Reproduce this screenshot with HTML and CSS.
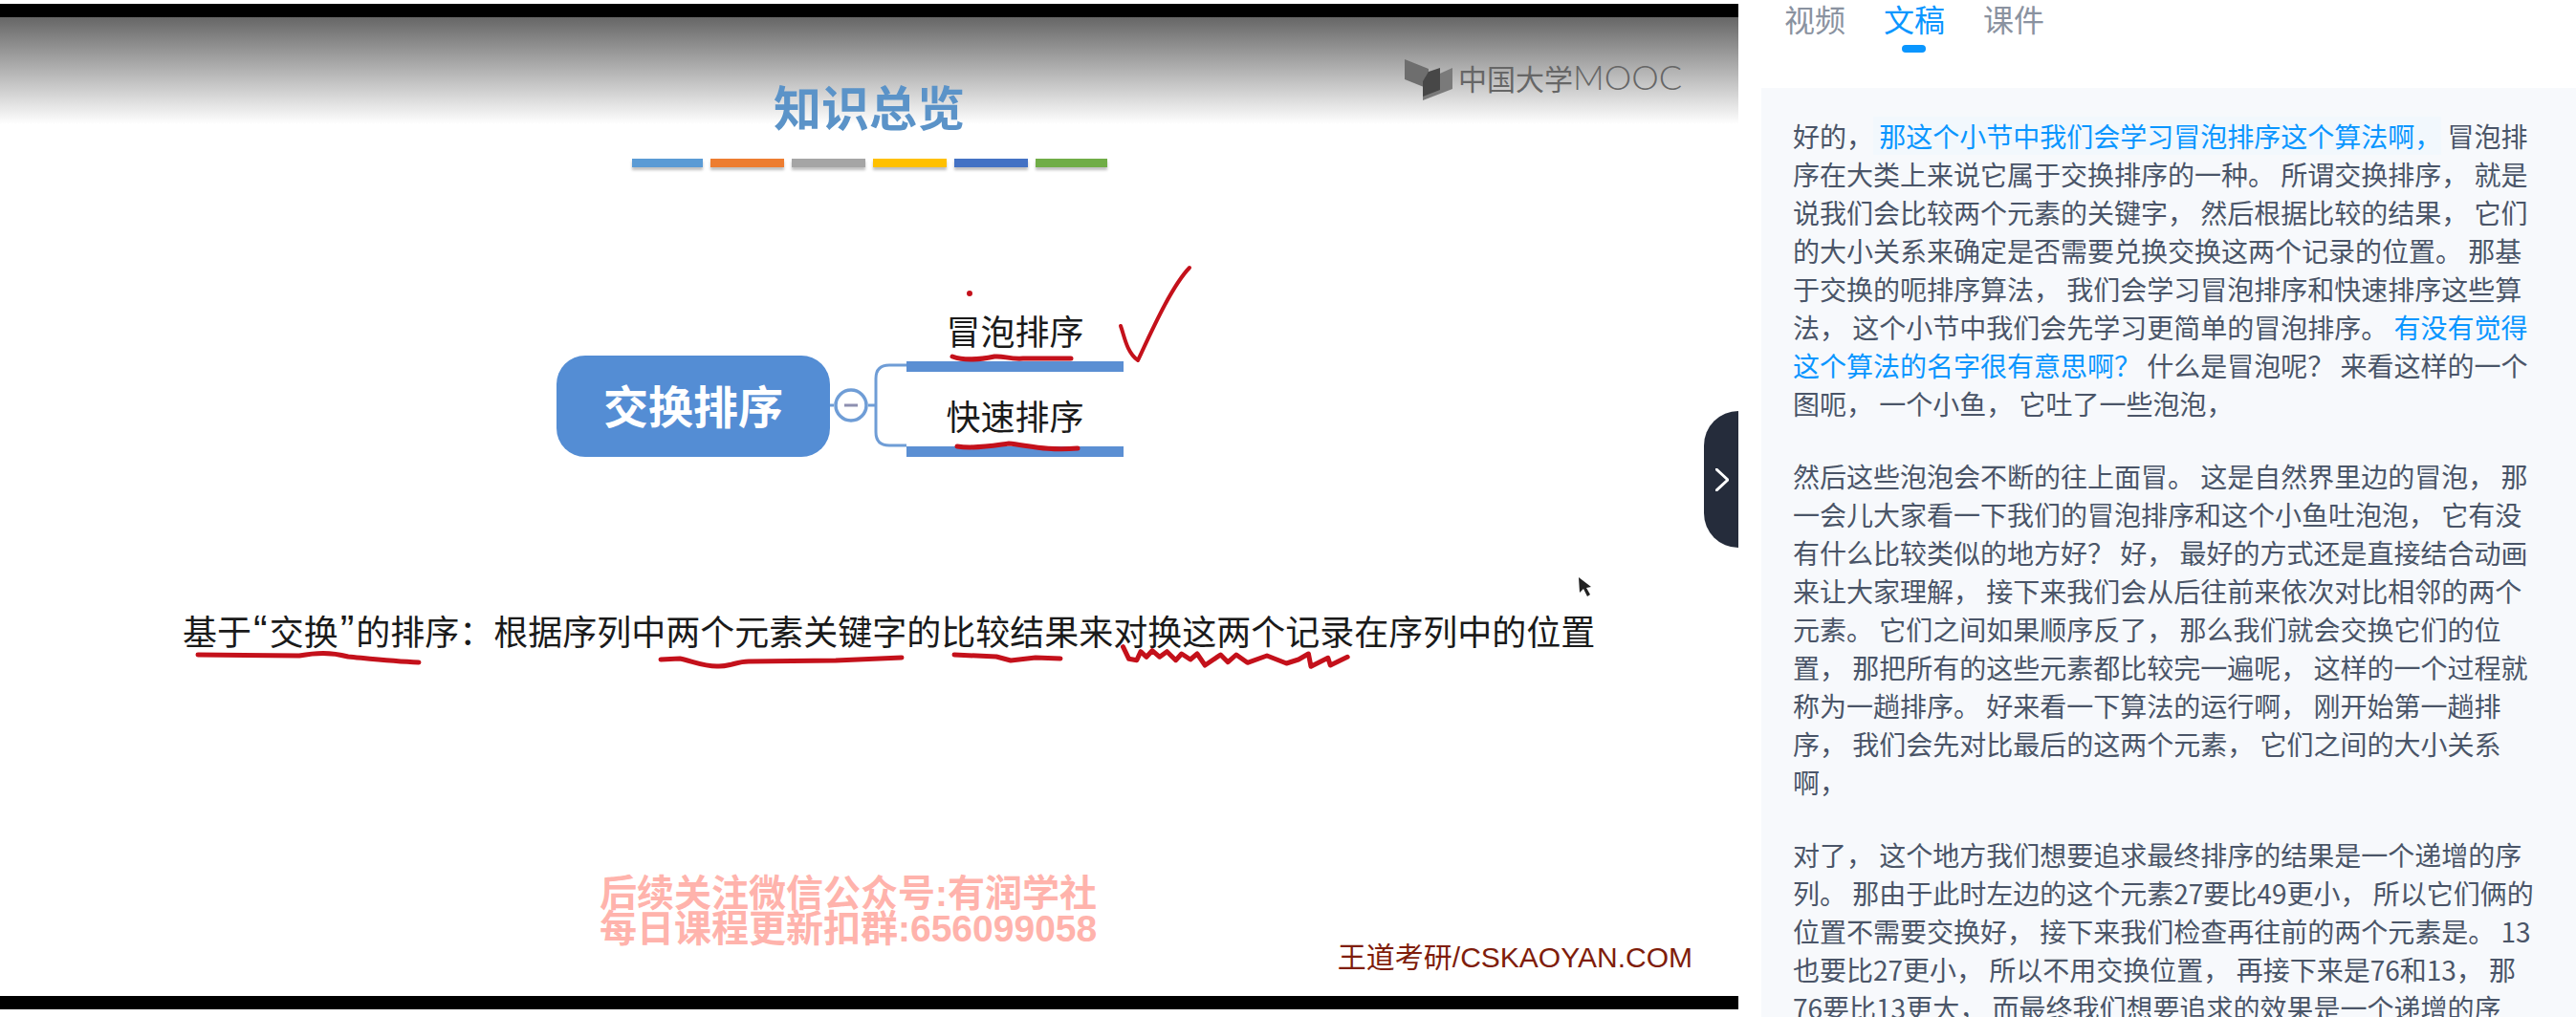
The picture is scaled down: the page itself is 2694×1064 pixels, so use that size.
FILE: index.html
```html
<!DOCTYPE html>
<html lang="zh-CN">
<head>
  <meta charset="UTF-8">
  <title>冒泡排序</title>
  <link rel="stylesheet" href="styles.css">
</head>
<body>
  <div class="video">
    <div class="slide">
      <h1 class="slide-title">知识总览</h1>
      <div class="color-bars">
        <span class="bar bar-blue"></span>
        <span class="bar bar-orange"></span>
        <span class="bar bar-gray"></span>
        <span class="bar bar-yellow"></span>
        <span class="bar bar-navy"></span>
        <span class="bar bar-green"></span>
      </div>

      <div class="mindmap">
        <div class="node">交换排序</div>
        <svg class="bracket" width="80" height="106" viewBox="0 0 80 106">
          <path d="M0 52H4M40 52H48M80 10H62Q48 10 48 24V80Q48 94 62 94H80" fill="none" stroke="#6f9dd6" stroke-width="3"/>
          <circle cx="22" cy="52" r="16" fill="#fff" stroke="#6f9dd6" stroke-width="3.5"/>
          <path d="M15 52H29" stroke="#8d8fb0" stroke-width="3"/>
        </svg>
        <div class="branches">
          <div class="branch">冒泡排序</div>
          <div class="branch">快速排序</div>
        </div>
      </div>

      <p class="slide-desc">基于<span class="quote">“</span>交换<span class="quote">”</span>的排序：根据序列中两个元素关键字的比较结果来对换这两个记录在序列中的位置</p>

      <div class="watermark">
        <div>后续关注微信公众号:有润学社</div>
        <div>每日课程更新扣群:656099058</div>
      </div>
      <div class="source">王道考研/CSKAOYAN.COM</div>

      <div class="logo">
        <svg width="52" height="46" viewBox="0 0 52 46">
          <path d="M0 1L25 11V32L0 22Z" fill="#6e6e6e"/>
          <path d="M19 24L50 10V32L19 44Z" fill="#7a7a7a"/>
          <path d="M25 14L37 10V33L19 40V24Z" fill="#474747"/>
        </svg>
        <span class="logo-text">中国大学<span class="logo-latin">MOOC</span></span>
      </div>

      <!-- handwriting on top of the slide, coordinates are page pixels -->
      <svg class="ink" viewBox="0 18 1818 1024">
        <g fill="none" stroke="#c4111b" stroke-linecap="round" stroke-linejoin="round">
          <circle cx="1014" cy="307" r="1.5" stroke-width="3"/>
          <path stroke-width="4" d="M1172 341C1176 352 1178 368 1190 377C1205 345 1225 300 1244 280"/>
          <path stroke-width="5" d="M996 373C1010 378 1025 376 1040 373C1050 372 1055 376 1070 375L1120 375"/>
          <path stroke-width="5" d="M1001 467C1020 470 1040 466 1055 464C1075 466 1095 472 1127 469"/>
          <path stroke-width="5" d="M207 685L313 686C330 683 345 682 364 687C385 689 410 692 438 693"/>
          <path stroke-width="5" d="M691 690L711 689C725 692 738 698 752 697C765 697 770 692 783 692L874 691L943 688"/>
          <path stroke-width="5" d="M998 685L1042 687L1057 691L1083 688L1109 689"/>
          <polyline stroke-width="5" points="1174.5,676.7 1180.6,689.3 1188.8,690.7 1192.9,681.7 1199,687.3 1205,680.7 1212.8,687.3 1220.4,681.7 1229.6,690.7 1235.7,684 1244.9,690 1252,684 1260.2,696 1276.5,685 1284.2,692.7 1292.9,685 1304.6,693.3 1325,686 1345.4,694 1358,690 1368.4,684 1371,697.3 1388.8,688.3 1391.3,696 1409.2,687.3"/>
        </g>
        <path d="M1651 604L1652 620L1656 616L1660 624L1663 622L1659 615L1664 614Z" fill="#222"/>
      </svg>

      <div class="collapse-btn">
        <svg width="14" height="24" viewBox="0 0 14 24">
          <path d="M1 1L13 12L1 23" fill="none" stroke="#fff" stroke-width="3" stroke-linecap="round" stroke-linejoin="round"/>
        </svg>
      </div>
    </div>
  </div>

  <aside class="side">
    <nav class="tabs">
      <a class="tab">视频</a>
      <a class="tab active">文稿</a>
      <a class="tab">课件</a>
    </nav>
    <div class="transcript">
      <p>好的，<span class="hl hl-current"> 那这个小节中我们会学习冒泡排序这个算法啊，</span> 冒泡排序在大类上来说它属于交换排序的一种。 所谓交换排序， 就是说我们会比较两个元素的关键字， 然后根据比较的结果， 它们的大小关系来确定是否需要兑换交换这两个记录的位置。 那基于交换的呃排序算法， 我们会学习冒泡排序和快速排序这些算法， 这个小节中我们会先学习更简单的冒泡排序。 <span class="hl">有没有觉得这个算法的名字很有意思啊？</span> 什么是冒泡呢？ 来看这样的一个图呃， 一个小鱼， 它吐了一些泡泡，</p>
      <p>然后这些泡泡会不断的往上面冒。 这是自然界里边的冒泡， 那一会儿大家看一下我们的冒泡排序和这个小鱼吐泡泡， 它有没有什么比较类似的地方好？ 好， 最好的方式还是直接结合动画来让大家理解， 接下来我们会从后往前来依次对比相邻的两个元素。 它们之间如果顺序反了， 那么我们就会交换它们的位置， 那把所有的这些元素都比较完一遍呢， 这样的一个过程就称为一趟排序。 好来看一下算法的运行啊， 刚开始第一趟排序， 我们会先对比最后的这两个元素， 它们之间的大小关系啊，</p>
      <p>对了， 这个地方我们想要追求最终排序的结果是一个递增的序列。 那由于此时左边的这个元素27要比49更小， 所以它们俩的位置不需要交换好， 接下来我们检查再往前的两个元素是。 13也要比27更小， 所以不用交换位置， 再接下来是76和13， 那76要比13更大， 而最终我们想要追求的效果是一个递增的序</p>
    </div>
  </aside>
</body>
</html>
```

FILE: styles.css
```css
* {
  box-sizing: border-box;
}
html, body {
  height: 100%;
}
body {
  margin: 0;
  display: flex;
  overflow: hidden;
  background: #fff;
  font-family: "Noto Sans CJK SC", sans-serif;
}

/* video side */
.video {
  width: 1818px;
  height: 1052px;
  margin-top: 4px;
  flex-shrink: 0;
  border-top: 14px solid #000;
  border-bottom: 14px solid #000;
}
.slide {
  position: relative;
  height: 100%;
  display: flex;
  flex-direction: column;
  background: linear-gradient(#666 0, #fff 112px);
  overflow: hidden;
}
.slide-title {
  align-self: center;
  margin: 56px 0 0;
  font-size: 50px;
  line-height: 72px;
  font-weight: 700;
  color: #5b93c8;
}
.color-bars {
  display: flex;
  justify-content: center;
  gap: 8px;
  margin-top: 20px;
}
.bar {
  width: 77px;
  height: 9px;
  box-shadow: 0 3px 3px rgba(0, 0, 0, 0.25);
}
.bar-blue { background: #5b9bd5; width: 74px; }
.bar-orange { background: #ed7d31; }
.bar-gray { background: #a5a5a5; }
.bar-yellow { background: #ffc000; }
.bar-navy { background: #4472c4; }
.bar-green { background: #70ad47; width: 75px; }

.mindmap {
  display: flex;
  align-items: flex-end;
  margin: 157px 0 0 582px;
}
.node {
  width: 286px;
  height: 106px;
  border-radius: 30px;
  background: #548dd4;
  color: #fff;
  font-size: 47px;
  font-weight: 700;
  line-height: 102px;
  text-align: center;
}
.branches {
  width: 227px;
}
.branch {
  height: 57px;
  border-bottom: 11px solid #5b8fd3;
  font-size: 36px;
  line-height: 26px;
  text-align: center;
  color: #1a1a1a;
}
.branch + .branch {
  margin-top: 32px;
}

.slide-desc {
  align-self: flex-start;
  margin: 157px 0 0 191px;
  font-size: 36px;
  line-height: 48px;
  color: #1a1a1a;
  white-space: nowrap;
}
.quote {
  font-family: "Liberation Sans", sans-serif;
  font-size: 44px;
  line-height: 0;
  padding: 0 2px;
}
.watermark {
  align-self: flex-start;
  margin: 233px 0 0 627px;
  font-family: "Liberation Sans", "Noto Sans CJK SC", sans-serif;
  font-size: 39px;
  line-height: 37px;
  font-weight: 700;
  color: #ffb3ac;
  white-space: nowrap;
}
.source {
  align-self: flex-end;
  margin-right: 48px;
  font-family: "Liberation Sans", "Noto Sans CJK SC", sans-serif;
  font-size: 30px;
  line-height: 24px;
  color: #7f1d0b;
}

.logo {
  position: absolute;
  top: 43px;
  right: 59px;
  display: flex;
  align-items: flex-start;
  gap: 4px;
  color: #666;
}
.logo-text {
  font-size: 30px;
  line-height: 38px;
  white-space: nowrap;
}
.logo-latin {
  font-family: "Lato", "Liberation Sans", sans-serif;
  font-weight: 300;
  font-size: 36px;
}
.ink {
  position: absolute;
  top: 0;
  left: 0;
  width: 100%;
  height: 100%;
  pointer-events: none;
}
.collapse-btn {
  position: absolute;
  right: 0;
  top: 412px;
  width: 36px;
  height: 143px;
  border-radius: 36px 0 0 36px;
  background: #252c3b;
  display: flex;
  align-items: center;
  justify-content: center;
  padding-left: 2px;
}

/* transcript side */
.side {
  flex: 1;
  min-width: 0;
  display: flex;
  flex-direction: column;
}
.tabs {
  display: flex;
  gap: 40px;
  height: 92px;
  padding-left: 48px;
}
.tab {
  position: relative;
  font-size: 32px;
  line-height: 38px;
  height: 38px;
  color: #8a92a0;
}
.tab.active {
  color: #0a96ff;
}
.tab.active::after {
  content: "";
  position: absolute;
  left: 19px;
  top: 47px;
  width: 25px;
  height: 8px;
  border-radius: 4px;
  background: #0a96ff;
}
.transcript {
  flex: 1;
  margin-left: 24px;
  padding: 30px 33px 0 33px;
  background: #f7f9fc;
  font-size: 28px;
  line-height: 40px;
  color: #4a5568;
  overflow: hidden;
}
.transcript p {
  margin: 0 0 36px;
}
.hl {
  color: #0a96ff;
}
.hl-current {
  background: #f2f8fd;
}
```
